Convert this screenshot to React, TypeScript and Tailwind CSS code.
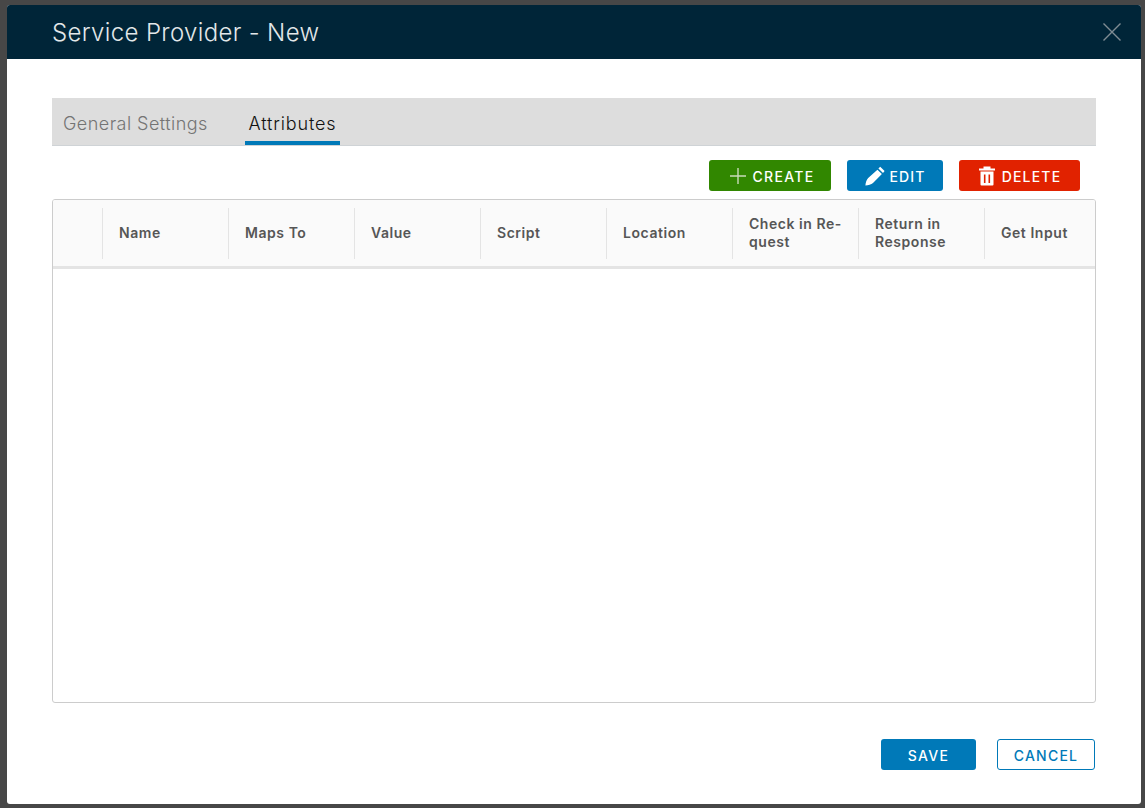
import React from "react";

function Plus() {
  return (
    <svg width="18" height="18" viewBox="0 0 18 18" className="mr-[5px]">
      <path d="M9 1v16M1 9h16" stroke="#c9dcb9" strokeWidth="1.4" fill="none" />
    </svg>
  );
}
function Pencil() {
  return (
    <svg width="20" height="20" viewBox="0 0 20 20" className="mr-[5px]">
      <path d="M15.2 0.8 19.6 5 18 6.9 13.4 2.6ZM12.4 3.8l4.5 4.2L8 17c-1.8 1.4-4.7 2.2-7.6 2.4.3-3 1.1-5.6 2.8-7.4Z" fill="#fff" />
    </svg>
  );
}
function Trash() {
  return (
    <svg width="18" height="20" viewBox="0 0 18 20" className="mr-[6px]">
      <path d="M5.5 0.5h7V2.5H17V4.5H1V2.5h4.5Z" fill="#fff" />
      <path d="M2.5 5.5h13v13a1 1 0 0 1-1 1h-11a1 1 0 0 1-1-1Z" fill="#fff" />
      <path d="M6.7 8.5v8.5M11.3 8.5v8.5" stroke="#e12200" strokeWidth="1.6" />
    </svg>
  );
}

const cols = ["", "Name", "Maps To", "Value", "Script", "Location", "Check in Re-quest", "Return in Response", "Get Input"];

export default function App() {
  return (
    <div className="w-[1145px] h-[808px] bg-[#474747] pt-[5px] pl-[7px] pr-[4px] pb-[4px] overflow-hidden font-['Inter','Liberation_Sans',sans-serif]">
      <div className="h-[799px] bg-white rounded-[3px] flex flex-col overflow-hidden">
        <div className="h-[54px] bg-[#002538] flex items-center justify-between pl-[45px] pr-[19px] shrink-0">
          <span className="text-[24px] font-light text-[#e3e8ea] leading-none tracking-[0.35px] pt-[1px]">Service Provider - New</span>
          <svg width="20" height="20" viewBox="0 0 20 20">
            <path d="M1.5 1.5l17 17M18.5 1.5l-17 17" stroke="#7f8c93" strokeWidth="1.4" fill="none" />
          </svg>
        </div>
        <div className="flex-1 flex flex-col pt-[39px] pl-[45px] pr-[45px]">
          <div className="h-[48px] bg-[#dddddd] border-b border-[#cfd3d6] flex items-stretch pl-[11px] shrink-0">
            <div className="text-[18px] text-[#747474] flex items-center pt-[4px] w-[182px] font-light tracking-[0.45px]">General Settings</div>
            <div className="text-[18px] text-[#111111] flex items-center justify-center pt-[8px] w-[95px] border-b-4 border-[#0079b8] font-light tracking-[0.85px]">Attributes</div>
          </div>
          <div className="flex justify-end gap-4 pr-[16px] mt-[14px] shrink-0">
            <button className="h-[31px] w-[122px] pt-[1px] pl-[4px] bg-[#318700] rounded-[3px] flex items-center justify-center text-white text-[14px] font-medium tracking-[1.35px]"><Plus />CREATE</button>
            <button className="h-[31px] w-[96px] pt-[1px] bg-[#0079b8] rounded-[3px] flex items-center justify-center text-white text-[14px] font-medium tracking-[1.1px]"><Pencil />EDIT</button>
            <button className="h-[31px] w-[121px] pt-[1px] bg-[#e12200] rounded-[3px] flex items-center justify-center text-white text-[14px] font-medium tracking-[1.2px]"><Trash />DELETE</button>
          </div>
          <div className="mt-[8px] h-[504px] border border-[#cccccc] rounded-[3px] shrink-0 overflow-hidden">
            <div className="h-[69px] pt-[1px] bg-[#fafafa] border-b-[3px] border-[#e4e4e4] flex items-center">
              {cols.map((c, i) => (
                <div key={i} className={`${i === 0 ? "w-[49px]" : "w-[126px] border-l border-[#e4e4e4] pl-[16px] pr-[8px]"} h-[51px] pb-[2px] flex items-center text-[14px] leading-[18px] font-semibold text-[#565656] tracking-[0.55px] shrink-0`}>
                  <span>{c === "Check in Re-quest" ? <>Check in Re-<br />quest</> : c}</span>
                </div>
              ))}
            </div>
          </div>
          <div className="flex justify-end gap-[21px] mt-[36px] pr-[1px]">
            <button className="h-[31px] w-[95px] pt-[1px] bg-[#0079b8] rounded-[3px] text-white text-[14px] font-medium tracking-[1.3px]">SAVE</button>
            <button className="h-[31px] w-[98px] pt-[1px] bg-white border border-[#0079b8] rounded-[3px] text-[#0079b8] text-[14px] font-medium tracking-[1.25px]">CANCEL</button>
          </div>
        </div>
      </div>
    </div>
  );
}
